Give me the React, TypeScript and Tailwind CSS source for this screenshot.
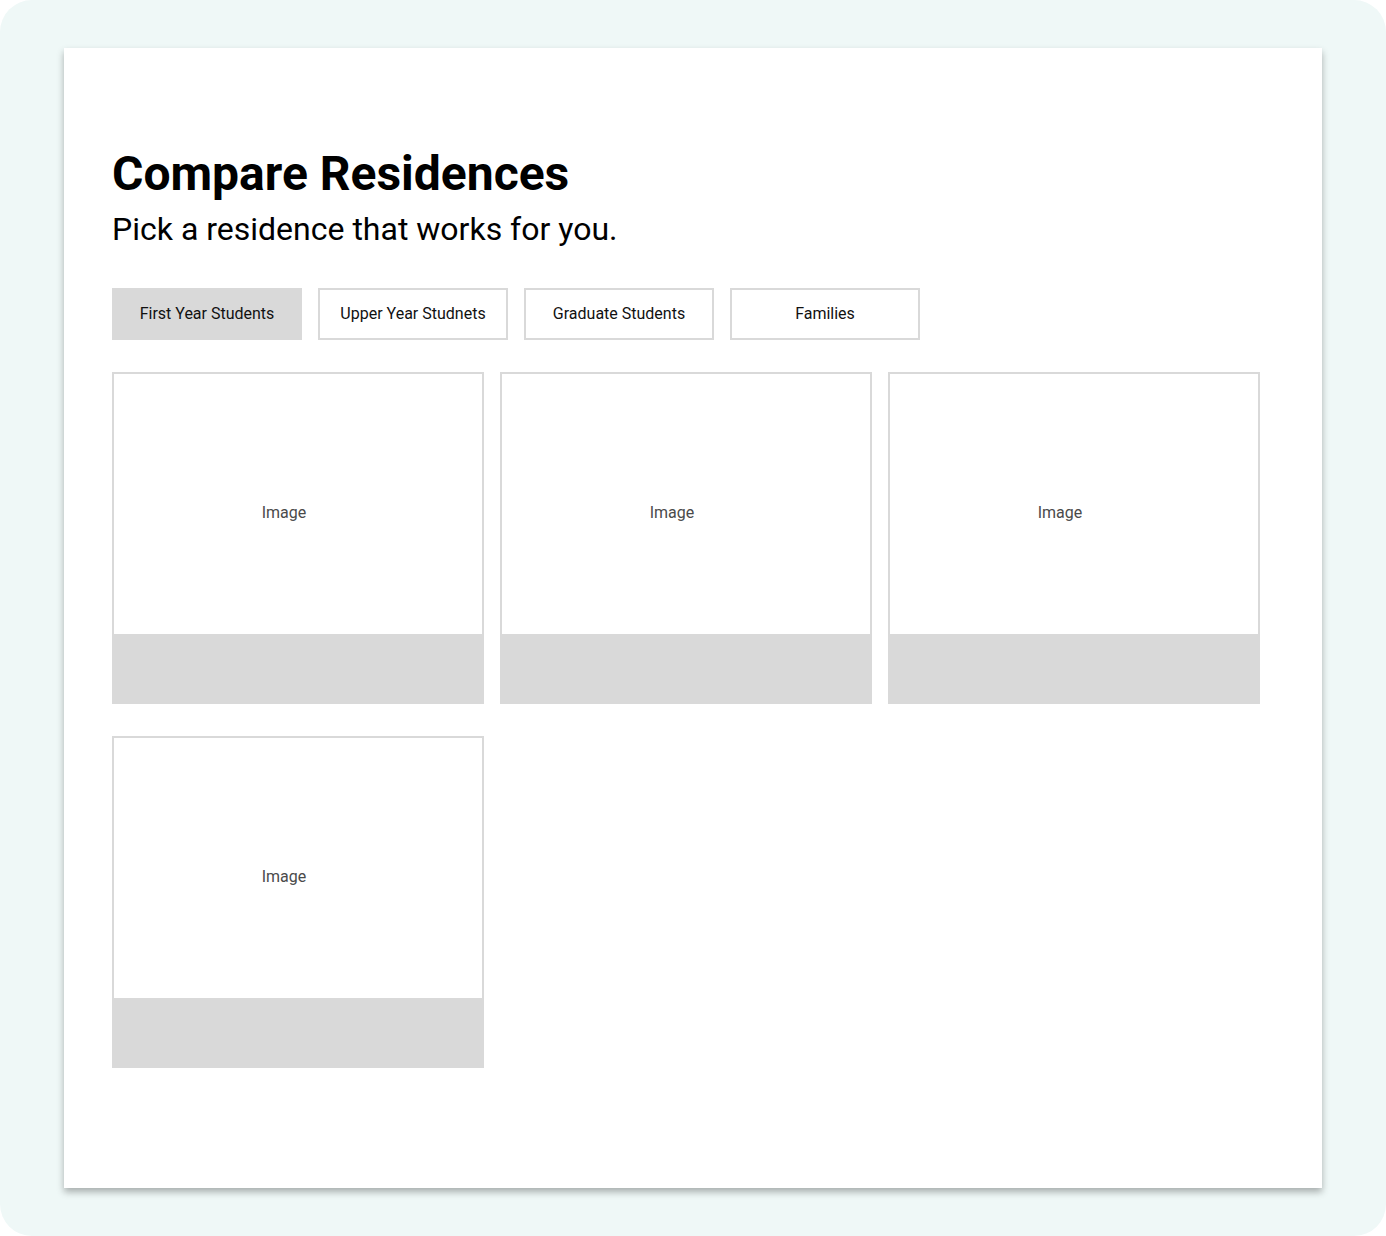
import React from "react";

const tabs = [
  { label: "First Year Students", active: true },
  { label: "Upper Year Studnets", active: false },
  { label: "Graduate Students", active: false },
  { label: "Families", active: false },
];

function ResidenceCard() {
  return (
    <div className="flex flex-col w-[372px]">
      <div className="h-[262px] border-2 border-b-0 border-[#d9d9d9] bg-white flex items-center justify-center pr-[28px] pt-[18px]">
        <span className="text-[16px] text-[#4a4a4a]">Image</span>
      </div>
      <div className="h-[70px] bg-[#d9d9d9]" />
    </div>
  );
}

export default function App() {
  return (
    <div className="bg-white w-[1386px] h-[1236px]" style={{ fontFamily: "Roboto, 'Noto Sans', sans-serif" }}>
      <div className="w-[1386px] h-[1236px] rounded-[32px] bg-[#eff8f7] pt-[48px] pl-[64px]">
        <div className="w-[1258px] h-[1140px] bg-white shadow-[0_4px_7px_rgba(0,0,0,0.3)] pl-[48px] pt-[98px]">
          <h1 className="text-[48px] leading-[56px] font-bold text-black">Compare Residences</h1>
          <p className="text-[32px] leading-[40px] text-black mt-[7px]">Pick a residence that works for you.</p>
          <div className="flex gap-[16px] mt-[39px]">
            {tabs.map((t) => (
              <div
                key={t.label}
                className={
                  t.active
                    ? "w-[190px] h-[52px] bg-[#d9d9d9] flex items-center justify-center text-[16px] text-[#111]"
                    : "w-[190px] h-[52px] border-2 border-[#d9d9d9] bg-white flex items-center justify-center text-[16px] text-[#111]"
                }
              >
                {t.label}
              </div>
            ))}
          </div>
          <div className="grid grid-cols-[372px_372px_372px] gap-x-[16px] gap-y-[32px] mt-[32px]">
            <ResidenceCard />
            <ResidenceCard />
            <ResidenceCard />
            <ResidenceCard />
          </div>
        </div>
      </div>
    </div>
  );
}
